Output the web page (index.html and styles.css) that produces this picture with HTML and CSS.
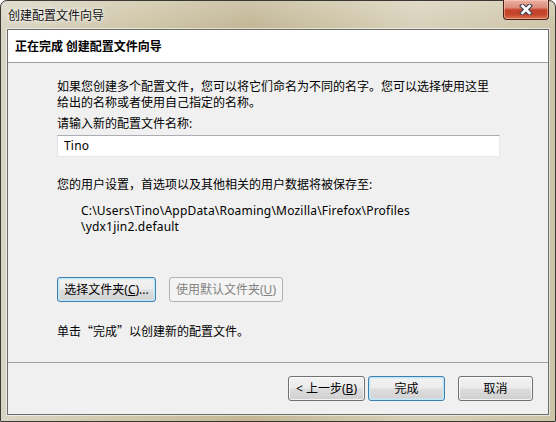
FILE: index.html
```html
<!DOCTYPE html>
<html lang="zh-CN">
<head>
<meta charset="utf-8">
<title>创建配置文件向导</title>
<link rel="stylesheet" href="styles.css">
</head>
<body>
<div class="window">
  <div class="titlebar">
    <span class="title">创建配置文件向导</span>
    <div class="close">
      <svg width="14" height="11" viewBox="0 0 14 11">
        <path d="M3.5 2 L10.5 9 M10.5 2 L3.5 9" stroke="#3d3f52" stroke-width="4.8" stroke-linecap="square" fill="none"/>
        <path d="M3.5 2 L10.5 9 M10.5 2 L3.5 9" stroke="#ffffff" stroke-width="2.6" stroke-linecap="square" fill="none"/>
      </svg>
    </div>
  </div>
  <div class="client">
    <div class="header">正在完成 创建配置文件向导</div>
    <div class="body">
      <p class="para">如果您创建多个配置文件，您可以将它们命名为不同的名字。您可以选择使用这里给出的名称或者使用自己指定的名称。</p>
      <p class="label">请输入新的配置文件名称:</p>
      <div class="textbox">Tino</div>
      <p class="info">您的用户设置，首选项以及其他相关的用户数据将被保存至:</p>
      <p class="path">C:\Users\Tino\AppData\Roaming\Mozilla\Firefox\Profiles<br>\ydx1jin2.default</p>
      <div class="btnrow">
        <div class="btn default folder">选择文件夹(<u>C</u>)...</div>
        <div class="btn disabled usedefault">使用默认文件夹(<u>U</u>)</div>
      </div>
      <p class="hint">单击<span class="q">“</span>完成<span class="q">”</span>以创建新的配置文件。</p>
    </div>
    <div class="footer">
      <div class="btn back">&lt; 上一步(<u>B</u>)</div>
      <div class="btn default finish">完成</div>
      <div class="btn cancel">取消</div>
    </div>
  </div>
</div>
</body>
</html>
```

FILE: styles.css
```css
html, body {
  margin: 0;
  padding: 0;
  background: #ffffff;
}

body {
  font-family: "Noto Sans", "Noto Sans CJK SC", sans-serif;
  font-size: 12px;
  color: #000;
}

.window {
  width: 556px;
  height: 422px;
  box-sizing: border-box;
  border: 1px solid #3a3833;
  border-radius: 7px 7px 1px 1px;
  padding: 0 6px 6px 6px;
  display: flex;
  flex-direction: column;
  background:
    linear-gradient(180deg, rgba(255,255,255,0.2) 0, rgba(255,255,255,0) 28px),
    linear-gradient(90deg, #d9d5c4 0%, #cfc6a8 25%, #c2b695 45%, #cdc4a6 60%, #d8d1ba 75%, #cdc4a8 100%);
}

.titlebar {
  height: 28px;
  display: flex;
  align-items: flex-start;
  flex-shrink: 0;
}

.title {
  padding: 6px 0 0 1px;
  line-height: 16px;
  font-family: "Noto Sans CJK SC", sans-serif;
  color: #111;
  text-shadow: 0 0 6px rgba(255,255,255,0.9), 0 0 3px rgba(255,255,255,0.9);
}

.close {
  margin-left: auto;
  margin-top: -1px;
  width: 46px;
  height: 20px;
  box-sizing: border-box;
  border: 1px solid #4e2018;
  border-top: none;
  border-radius: 0 0 4px 4px;
  background: linear-gradient(180deg, #eab0a2 0%, #dc8c79 40%, #c6432b 52%, #c4442c 75%, #d9754f 100%);
  box-shadow: inset 0 0 0 1px rgba(255,220,200,0.45);
  display: flex;
  align-items: center;
  justify-content: center;
}

.close svg {
  display: block;
}

.client {
  flex: 1;
  display: flex;
  flex-direction: column;
  border: 1px solid #6b6b6b;
  box-shadow: 0 0 0 1px rgba(255,255,255,0.55);
  background: #f0f0f0;
}

.header {
  height: 32px;
  line-height: 32px;
  background: #fff;
  padding-left: 7px;
  font-weight: bold;
  font-family: "Noto Sans CJK SC", sans-serif;
  border-bottom: 1px solid #a0a0a0;
  flex-shrink: 0;
}

.body {
  flex: 1;
  padding: 15px 0 0 49px;
  line-height: 16px;
}

.body p {
  margin: 0;
  width: 443px;
}

.para {
  font-family: "Noto Sans CJK SC", sans-serif;
}

.label {
  margin-top: 6px !important;
}

.textbox {
  margin-top: 3px;
  width: 443px;
  height: 22px;
  box-sizing: border-box;
  background: #fff;
  border: 1px solid #e3e9ef;
  border-top-color: #abadb3;
  border-left-color: #e2e3ea;
  padding-left: 6px;
  line-height: 20px;
  letter-spacing: 0.2px;
}

.info {
  margin-top: 20px !important;
}

.path {
  margin-top: 10px !important;
  padding-left: 24px;
  letter-spacing: 0.2px;
}

.btnrow {
  margin-top: 42px;
  display: flex;
  gap: 13px;
}

.hint {
  margin-top: 21px !important;
}

.q {
  font-family: "Noto Sans CJK SC", sans-serif;
}

.footer {
  height: 52px;
  box-sizing: border-box;
  border-top: 1px solid #a0a0a0;
  display: flex;
  justify-content: flex-end;
  align-items: flex-start;
  padding: 13px 15px 0 0;
  flex-shrink: 0;
}

.btn {
  height: 25px;
  box-sizing: border-box;
  border: 1px solid #707070;
  border-radius: 3px;
  background: linear-gradient(180deg, #f2f2f2 0%, #ebebeb 48%, #dddddd 52%, #cfcfcf 100%);
  box-shadow: inset 0 0 0 1px rgba(255,255,255,0.75);
  display: flex;
  align-items: center;
  justify-content: center;
  line-height: 16px;
  white-space: nowrap;
}

.btn.default {
  border-color: #3c7fb1;
  box-shadow: inset 0 0 0 1px #c3e7f8, inset 0 0 0 2px rgba(200,235,250,0.5);
  background: linear-gradient(180deg, #f3f3f3 0%, #ececec 48%, #dedede 52%, #d1d1d1 100%);
}

.btn.disabled {
  border-color: #adb2b5;
  background: #f4f4f4;
  box-shadow: none;
  color: #838383;
}

.folder { width: 99px; }
.usedefault { width: 114px; }

.back { width: 77px; }
.finish { width: 77px; margin-left: 3px; }
.cancel { width: 75px; margin-left: 13px; }
```
